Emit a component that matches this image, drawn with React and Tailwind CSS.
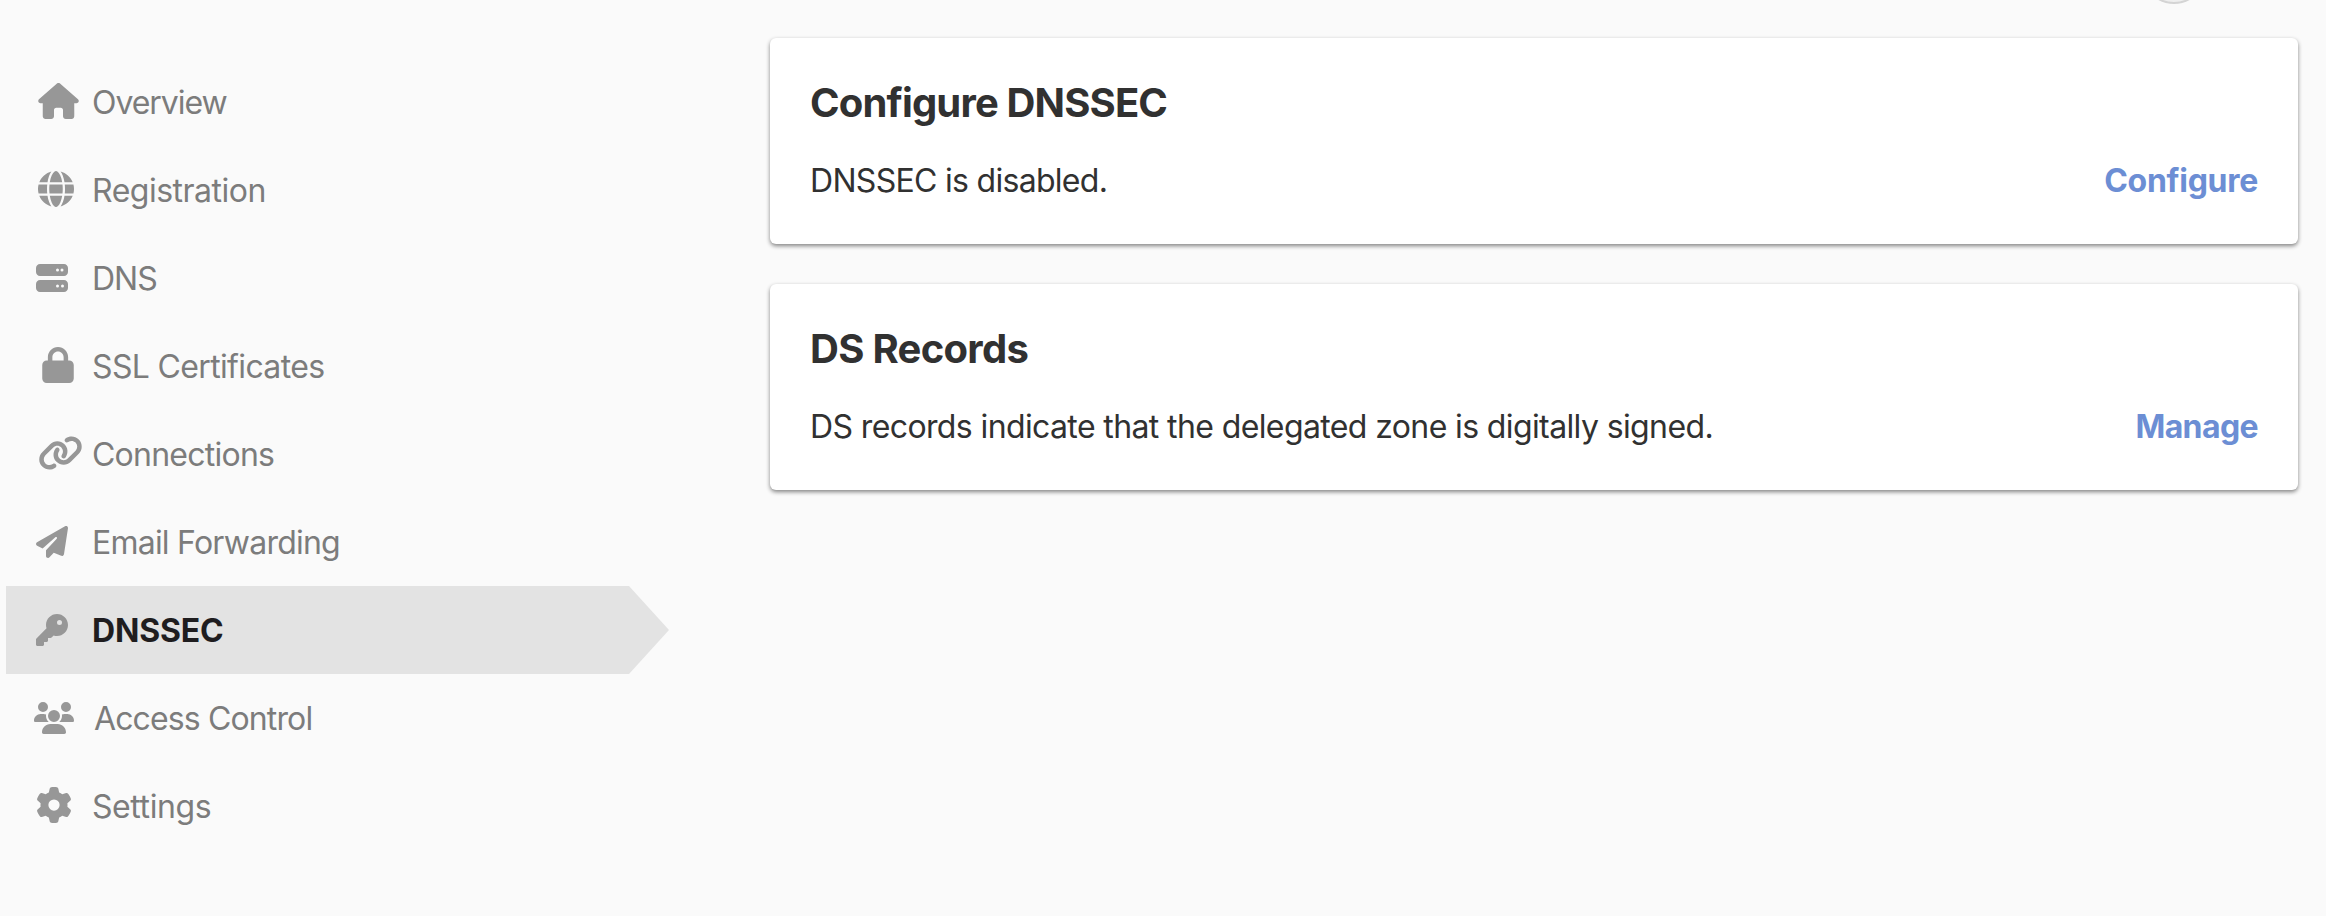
import React from 'react';
import {
  FaHouse,
  FaGlobe,
  FaServer,
  FaLock,
  FaLink,
  FaPaperPlane,
  FaKey,
  FaUsers,
  FaGear,
} from 'react-icons/fa6';

const NAV = [
  { label: 'Overview', Icon: FaHouse, icon: 'w-[41px] h-[36px] ml-[32px] mb-[3px]', text: 'tracking-[-1.05px]' },
  { label: 'Registration', Icon: FaGlobe, icon: 'w-[36px] h-[36px] ml-[32px] mb-[3px]', text: 'tracking-[-0.5px]' },
  { label: 'DNS', Icon: FaServer, icon: 'w-[32px] h-[32px] ml-[30px]', text: 'tracking-[-1px]' },
  { label: 'SSL Certificates', Icon: FaLock, icon: 'w-[32px] h-[36px] ml-[36px] mb-[3px]', text: 'tracking-[-0.65px]' },
  { label: 'Connections', Icon: FaLink, icon: 'w-[45px] h-[36px] ml-[32px] mb-[3px]', text: 'tracking-[-0.76px]' },
  { label: 'Email Forwarding', Icon: FaPaperPlane, icon: 'w-[32px] h-[32px] ml-[30px]', text: 'tracking-[-0.78px]' },
  { label: 'DNSSEC', Icon: FaKey, icon: 'w-[32px] h-[32px] ml-[30px]', text: 'tracking-[-0.16px]', active: true },
  { label: 'Access Control', Icon: FaUsers, icon: 'w-[40px] h-[32px] ml-[28px]', text: 'tracking-[-0.87px] pl-[2px]' },
  { label: 'Settings', Icon: FaGear, icon: 'w-[36px] h-[36px] ml-[30px] mb-[3px]', text: 'tracking-[-0.42px]' },
];

const CARDS = [
  {
    title: 'Configure DNSSEC',
    titleClass: 'tracking-[-0.84px]',
    body: 'DNSSEC is disabled.',
    bodyClass: 'tracking-[-0.7px]',
    action: 'Configure',
    actionClass: 'tracking-[-0.28px]',
  },
  {
    title: 'DS Records',
    titleClass: 'tracking-[-0.7px]',
    body: 'DS records indicate that the delegated zone is digitally signed.',
    bodyClass: 'tracking-[-0.615px]',
    action: 'Manage',
    actionClass: 'tracking-[-0.6px]',
  },
];

function NavItem({ label, Icon, icon, text, active }) {
  return (
    <a
      className={`flex h-[88px] w-[663px] items-center ${
        active
          ? 'bg-[#e3e3e3] font-bold text-[#1f1d1f] [clip-path:polygon(0_0,623px_0,100%_50%,623px_100%,0_100%)]'
          : 'text-[#7c7c7c]'
      }`}
    >
      <span className="flex w-[86px] shrink-0 items-center">
        <Icon className={`shrink-0 text-[#979797] ${icon}`} />
      </span>
      <span className={`pt-[2px] whitespace-nowrap ${text}`}>{label}</span>
    </a>
  );
}

function Card({ title, titleClass, body, bodyClass, action, actionClass }) {
  return (
    <section className="flex h-[206px] flex-col justify-between rounded-[6px] bg-white px-10 pt-[41px] pb-[39px] shadow-[0_2px_4px_rgba(0,0,0,0.48)]">
      <h2 className={`text-[40px] leading-[48px] font-bold ${titleClass}`}>{title}</h2>
      <div className="flex items-center justify-between leading-[48px]">
        <p className={bodyClass}>{body}</p>
        <a className={`font-bold text-[#6c8ed4] ${actionClass}`}>{action}</a>
      </div>
    </section>
  );
}

export default function App() {
  return (
    <div className="relative flex h-[916px] w-[2326px] overflow-hidden bg-[#fafafa] font-['Inter',sans-serif] text-[32px] text-[#313131]">
      <div className="absolute -top-[60px] left-[2142px] size-16 rounded-full border-2 border-[#d4d4d4] bg-[#efefef]" />
      <nav className="flex w-[770px] flex-col pt-[58px] pl-[6px]">
        {NAV.map((item) => (
          <NavItem key={item.label} {...item} />
        ))}
      </nav>
      <main className="flex w-[1528px] flex-col gap-10 pt-[38px]">
        {CARDS.map((card) => (
          <Card key={card.title} {...card} />
        ))}
      </main>
    </div>
  );
}
